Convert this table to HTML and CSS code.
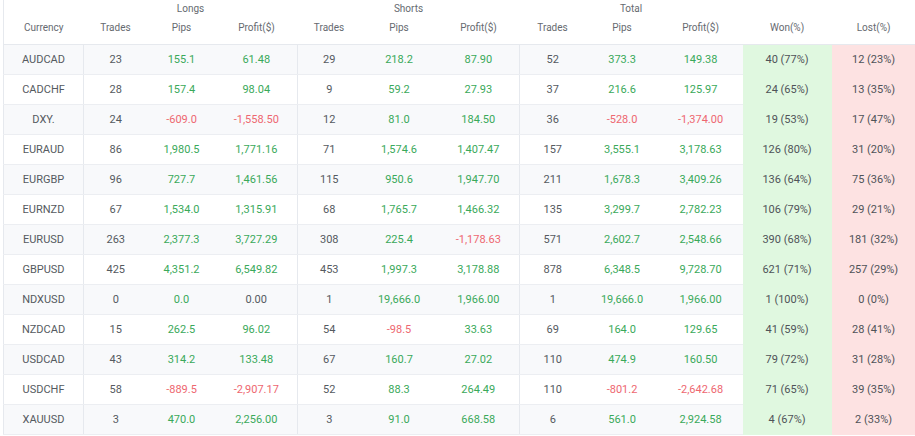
FILE: index.html
```html
<!DOCTYPE html>
<html>
<head>
<meta charset="utf-8">
<link rel="stylesheet" href="styles.css">
</head>
<body>
<table class="stats">
  <colgroup>
    <col class="c-cur"><col class="c-lt"><col class="c-lp"><col class="c-lpr">
    <col class="c-st"><col class="c-sp"><col class="c-spr">
    <col class="c-tt"><col class="c-tp"><col class="c-tpr">
    <col class="c-won"><col class="c-lost">
  </colgroup>
  <thead>
    <tr class="group">
      <th></th>
      <th colspan="3">Longs</th>
      <th colspan="3">Shorts</th>
      <th colspan="3">Total</th>
      <th></th><th></th>
    </tr>
    <tr class="cols">
      <th>Currency</th>
      <th>Trades</th><th>Pips</th><th>Profit($)</th>
      <th>Trades</th><th>Pips</th><th>Profit($)</th>
      <th>Trades</th><th>Pips</th><th>Profit($)</th>
      <th>Won(%)</th><th>Lost(%)</th>
    </tr>
  </thead>
  <tbody id="rows"></tbody>
</table>
<script src="app.js"></script>
</body>
</html>
```

FILE: app.js
```js
const data = [
  ["AUDCAD","23","155.1","61.48","29","218.2","87.90","52","373.3","149.38","40 (77%)","12 (23%)"],
  ["CADCHF","28","157.4","98.04","9","59.2","27.93","37","216.6","125.97","24 (65%)","13 (35%)"],
  ["DXY.","24","-609.0","-1,558.50","12","81.0","184.50","36","-528.0","-1,374.00","19 (53%)","17 (47%)"],
  ["EURAUD","86","1,980.5","1,771.16","71","1,574.6","1,407.47","157","3,555.1","3,178.63","126 (80%)","31 (20%)"],
  ["EURGBP","96","727.7","1,461.56","115","950.6","1,947.70","211","1,678.3","3,409.26","136 (64%)","75 (36%)"],
  ["EURNZD","67","1,534.0","1,315.91","68","1,765.7","1,466.32","135","3,299.7","2,782.23","106 (79%)","29 (21%)"],
  ["EURUSD","263","2,377.3","3,727.29","308","225.4","-1,178.63","571","2,602.7","2,548.66","390 (68%)","181 (32%)"],
  ["GBPUSD","425","4,351.2","6,549.82","453","1,997.3","3,178.88","878","6,348.5","9,728.70","621 (71%)","257 (29%)"],
  ["NDXUSD","0","0.0","0.00","1","19,666.0","1,966.00","1","19,666.0","1,966.00","1 (100%)","0 (0%)"],
  ["NZDCAD","15","262.5","96.02","54","-98.5","33.63","69","164.0","129.65","41 (59%)","28 (41%)"],
  ["USDCAD","43","314.2","133.48","67","160.7","27.02","110","474.9","160.50","79 (72%)","31 (28%)"],
  ["USDCHF","58","-889.5","-2,907.17","52","88.3","264.49","110","-801.2","-2,642.68","71 (65%)","39 (35%)"],
  ["XAUUSD","3","470.0","2,256.00","3","91.0","668.58","6","561.0","2,924.58","4 (67%)","2 (33%)"]
];
const valueCols = [2,3,5,6,8,9];
const body = document.getElementById("rows");
data.forEach(row => {
  const tr = document.createElement("tr");
  row.forEach((v, i) => {
    const td = document.createElement("td");
    td.textContent = v;
    if (valueCols.includes(i)) {
      if (v.startsWith("-")) td.className = "neg";
      else if (v !== "0.00") td.className = "pos";
    }
    if (i === 0) td.classList.add("cur");
    if (i === 3 || i === 6) td.classList.add("sep");
    if (i === 10) td.classList.add("won");
    if (i === 11) td.classList.add("lost");
    tr.appendChild(td);
  });
  body.appendChild(tr);
});
```

FILE: styles.css
```css
html, body {
  margin: 0;
  padding: 0;
  background: #ffffff;
}
body {
  font-family: Roboto, "Liberation Sans", sans-serif;
  color: #555a60;
  overflow: hidden;
}
.stats {
  margin-left: 3px;
  border-collapse: collapse;
  table-layout: fixed;
  width: 912px;
  border-left: 1px solid #e6e9ee;
}
.c-cur { width: 80px; }
.c-lt { width: 64px; }
.c-lp { width: 68px; }
.c-lpr { width: 82px; }
.c-st { width: 63px; }
.c-sp { width: 77px; }
.c-spr { width: 82px; }
.c-tt { width: 66px; }
.c-tp { width: 73px; }
.c-tpr { width: 84px; }
.c-won { width: 89px; }
.c-lost { width: 84px; }

th {
  font-weight: 400;
  font-size: 10px;
  color: #666a70;
  text-align: center;
  padding: 0;
}
.group th {
  height: 17px;
  line-height: 17px;
  vertical-align: middle;
}
.cols th {
  height: 27px;
  line-height: 14px;
  vertical-align: middle;
  padding-bottom: 4px;
  box-sizing: border-box;
  border-bottom: 1px solid #e6e9ee;
}
td {
  height: 29px;
  padding: 0;
  font-size: 11px;
  text-align: center;
  vertical-align: middle;
  border-bottom: 1px solid #eceef2;
  white-space: nowrap;
}
tbody tr:nth-child(odd) td { background: #f8f9fb; }
td.cur { border-right: 1px solid #e6e9ee; }
td.sep { border-right: 1px solid #e6e9ee; }
td.pos { color: #3aa95a; }
td.neg { color: #ee6770; }
tbody tr td.won { background: #e0f8e0; border-bottom-color: #e0f8e0; color: #4f5358; }
tbody tr td.lost { background: #fde2e2; border-bottom-color: #fde2e2; color: #4f5358; }
```
